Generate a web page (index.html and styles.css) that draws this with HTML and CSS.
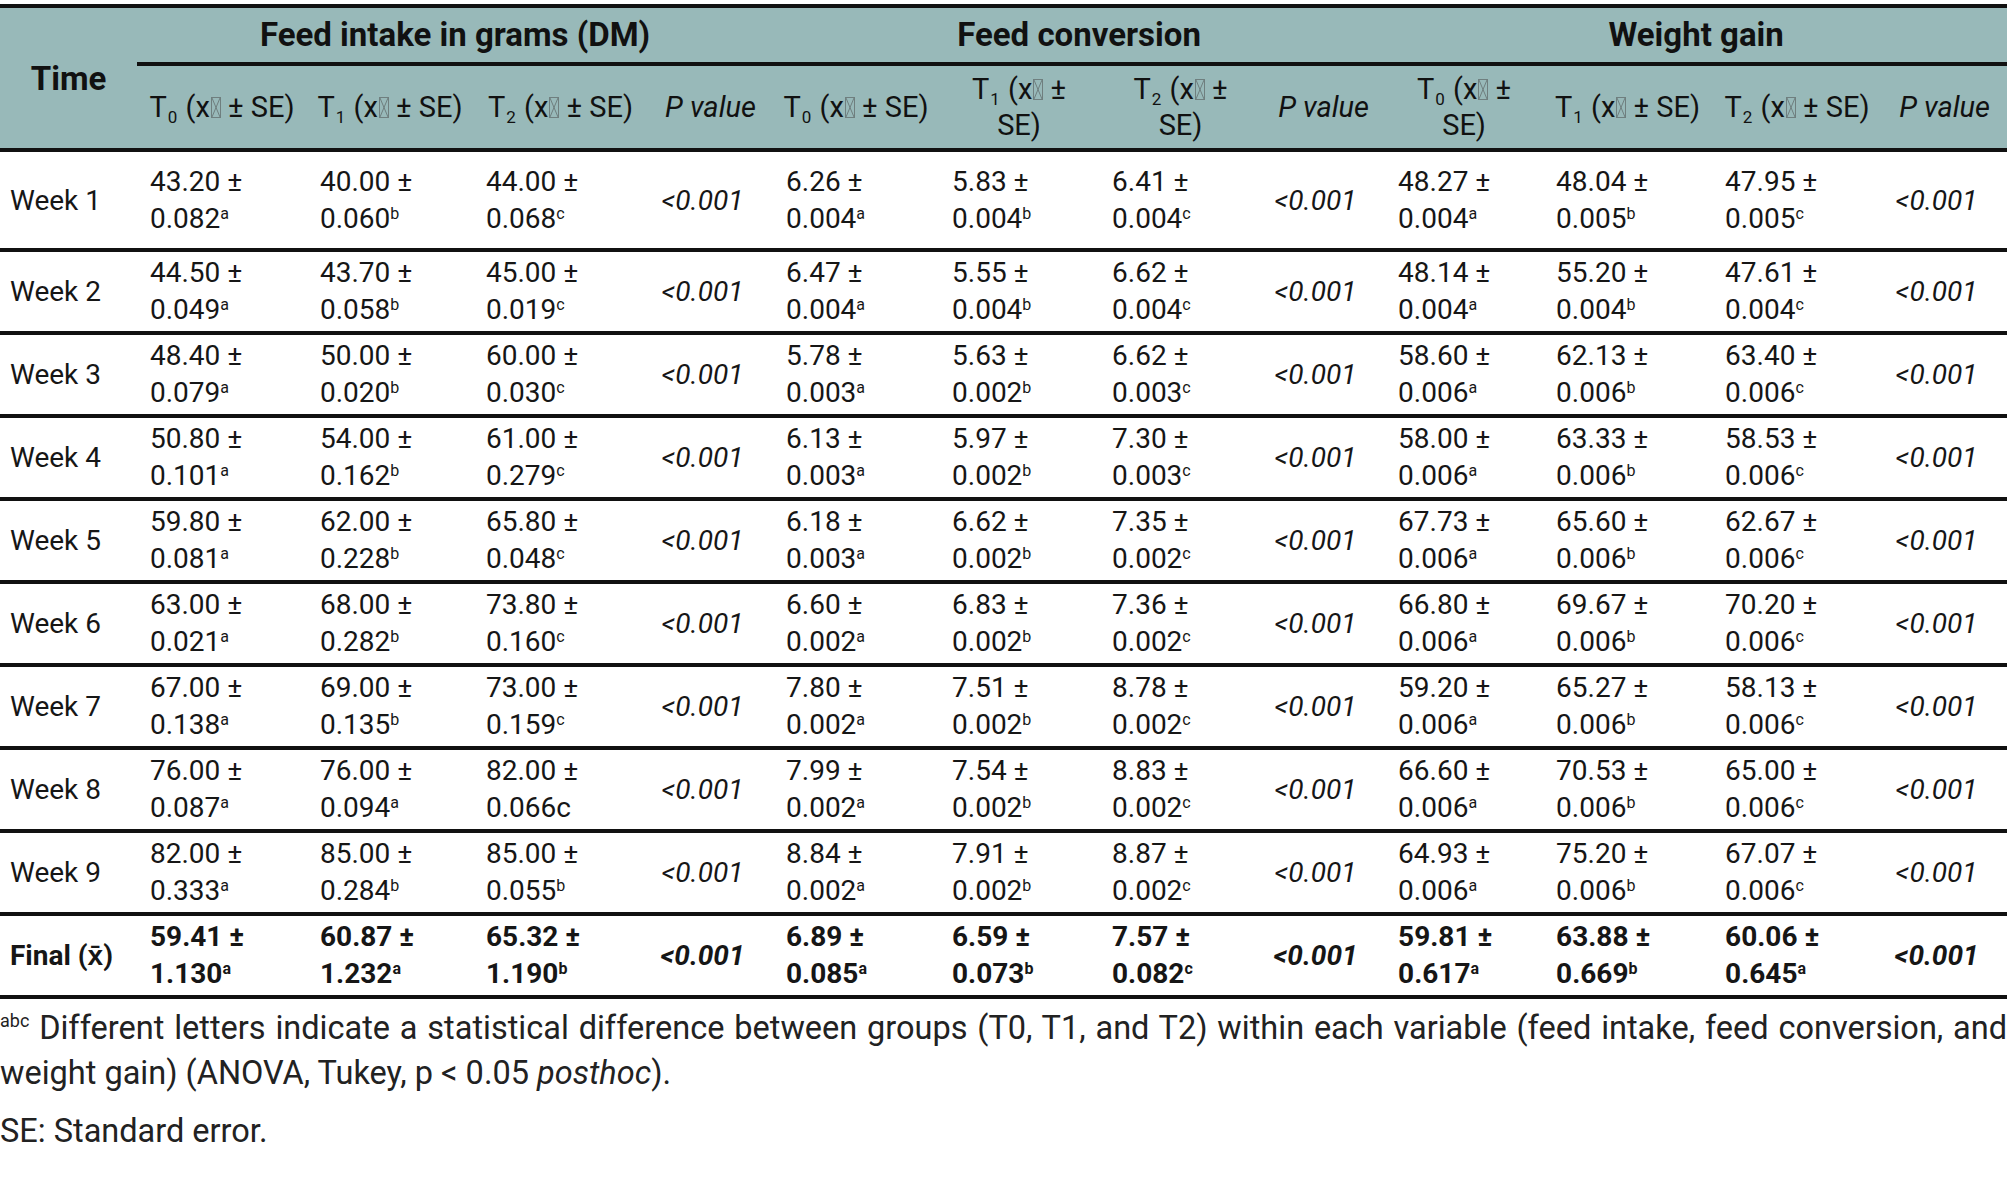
FILE: index.html
```html
<!DOCTYPE html>
<html lang="en">
<head>
<meta charset="utf-8">
<title>Feed intake, feed conversion and weight gain</title>
<link rel="stylesheet" href="styles.css">
</head>
<body>
<div class="wrap">
<table class="data">
  <colgroup>
    <col class="c-time">
    <col class="c170"><col class="c166"><col class="c175"><col class="c125">
    <col class="c166"><col class="c160"><col class="c163"><col class="c123">
    <col class="c158"><col class="c169"><col class="c170"><col class="c125">
  </colgroup>
  <thead>
    <tr class="grp">
      <th class="time" rowspan="2">Time</th>
      <th class="group" colspan="4">Feed intake in grams (DM)</th>
      <th class="group" colspan="4">Feed conversion</th>
      <th class="group" colspan="4">Weight gain</th>
    </tr>
    <tr class="sub">
      <th>T<sub>0</sub> (x<svg class="tofu" viewBox="0 0 10 21" width="10" height="21"><rect x="0.5" y="0.5" width="9" height="20"/><path d="M1 1 L9 20 M9 1 L1 20"/></svg> ± SE)</th>
      <th>T<sub>1</sub> (x<svg class="tofu" viewBox="0 0 10 21" width="10" height="21"><rect x="0.5" y="0.5" width="9" height="20"/><path d="M1 1 L9 20 M9 1 L1 20"/></svg> ± SE)</th>
      <th>T<sub>2</sub> (x<svg class="tofu" viewBox="0 0 10 21" width="10" height="21"><rect x="0.5" y="0.5" width="9" height="20"/><path d="M1 1 L9 20 M9 1 L1 20"/></svg> ± SE)</th>
      <th class="pv">P value</th>
      <th>T<sub>0</sub> (x<svg class="tofu" viewBox="0 0 10 21" width="10" height="21"><rect x="0.5" y="0.5" width="9" height="20"/><path d="M1 1 L9 20 M9 1 L1 20"/></svg> ± SE)</th>
      <th>T<sub>1</sub> (x<svg class="tofu" viewBox="0 0 10 21" width="10" height="21"><rect x="0.5" y="0.5" width="9" height="20"/><path d="M1 1 L9 20 M9 1 L1 20"/></svg> ±<br>SE)</th>
      <th>T<sub>2</sub> (x<svg class="tofu" viewBox="0 0 10 21" width="10" height="21"><rect x="0.5" y="0.5" width="9" height="20"/><path d="M1 1 L9 20 M9 1 L1 20"/></svg> ±<br>SE)</th>
      <th class="pv">P value</th>
      <th>T<sub>0</sub> (x<svg class="tofu" viewBox="0 0 10 21" width="10" height="21"><rect x="0.5" y="0.5" width="9" height="20"/><path d="M1 1 L9 20 M9 1 L1 20"/></svg> ±<br>SE)</th>
      <th>T<sub>1</sub> (x<svg class="tofu" viewBox="0 0 10 21" width="10" height="21"><rect x="0.5" y="0.5" width="9" height="20"/><path d="M1 1 L9 20 M9 1 L1 20"/></svg> ± SE)</th>
      <th>T<sub>2</sub> (x<svg class="tofu" viewBox="0 0 10 21" width="10" height="21"><rect x="0.5" y="0.5" width="9" height="20"/><path d="M1 1 L9 20 M9 1 L1 20"/></svg> ± SE)</th>
      <th class="pv">P value</th>
    </tr>
  </thead>
  <tbody>
    <tr class="first">
      <td class="wk">Week 1</td>
      <td>43.20 ±<br>0.082<sup>a</sup></td><td>40.00 ±<br>0.060<sup>b</sup></td><td>44.00 ±<br>0.068<sup>c</sup></td><td class="p">&lt;0.001</td>
      <td>6.26 ±<br>0.004<sup>a</sup></td><td>5.83 ±<br>0.004<sup>b</sup></td><td>6.41 ±<br>0.004<sup>c</sup></td><td class="p">&lt;0.001</td>
      <td>48.27 ±<br>0.004<sup>a</sup></td><td>48.04 ±<br>0.005<sup>b</sup></td><td>47.95 ±<br>0.005<sup>c</sup></td><td class="p">&lt;0.001</td>
    </tr>
    <tr>
      <td class="wk">Week 2</td>
      <td>44.50 ±<br>0.049<sup>a</sup></td><td>43.70 ±<br>0.058<sup>b</sup></td><td>45.00 ±<br>0.019<sup>c</sup></td><td class="p">&lt;0.001</td>
      <td>6.47 ±<br>0.004<sup>a</sup></td><td>5.55 ±<br>0.004<sup>b</sup></td><td>6.62 ±<br>0.004<sup>c</sup></td><td class="p">&lt;0.001</td>
      <td>48.14 ±<br>0.004<sup>a</sup></td><td>55.20 ±<br>0.004<sup>b</sup></td><td>47.61 ±<br>0.004<sup>c</sup></td><td class="p">&lt;0.001</td>
    </tr>
    <tr>
      <td class="wk">Week 3</td>
      <td>48.40 ±<br>0.079<sup>a</sup></td><td>50.00 ±<br>0.020<sup>b</sup></td><td>60.00 ±<br>0.030<sup>c</sup></td><td class="p">&lt;0.001</td>
      <td>5.78 ±<br>0.003<sup>a</sup></td><td>5.63 ±<br>0.002<sup>b</sup></td><td>6.62 ±<br>0.003<sup>c</sup></td><td class="p">&lt;0.001</td>
      <td>58.60 ±<br>0.006<sup>a</sup></td><td>62.13 ±<br>0.006<sup>b</sup></td><td>63.40 ±<br>0.006<sup>c</sup></td><td class="p">&lt;0.001</td>
    </tr>
    <tr>
      <td class="wk">Week 4</td>
      <td>50.80 ±<br>0.101<sup>a</sup></td><td>54.00 ±<br>0.162<sup>b</sup></td><td>61.00 ±<br>0.279<sup>c</sup></td><td class="p">&lt;0.001</td>
      <td>6.13 ±<br>0.003<sup>a</sup></td><td>5.97 ±<br>0.002<sup>b</sup></td><td>7.30 ±<br>0.003<sup>c</sup></td><td class="p">&lt;0.001</td>
      <td>58.00 ±<br>0.006<sup>a</sup></td><td>63.33 ±<br>0.006<sup>b</sup></td><td>58.53 ±<br>0.006<sup>c</sup></td><td class="p">&lt;0.001</td>
    </tr>
    <tr>
      <td class="wk">Week 5</td>
      <td>59.80 ±<br>0.081<sup>a</sup></td><td>62.00 ±<br>0.228<sup>b</sup></td><td>65.80 ±<br>0.048<sup>c</sup></td><td class="p">&lt;0.001</td>
      <td>6.18 ±<br>0.003<sup>a</sup></td><td>6.62 ±<br>0.002<sup>b</sup></td><td>7.35 ±<br>0.002<sup>c</sup></td><td class="p">&lt;0.001</td>
      <td>67.73 ±<br>0.006<sup>a</sup></td><td>65.60 ±<br>0.006<sup>b</sup></td><td>62.67 ±<br>0.006<sup>c</sup></td><td class="p">&lt;0.001</td>
    </tr>
    <tr>
      <td class="wk">Week 6</td>
      <td>63.00 ±<br>0.021<sup>a</sup></td><td>68.00 ±<br>0.282<sup>b</sup></td><td>73.80 ±<br>0.160<sup>c</sup></td><td class="p">&lt;0.001</td>
      <td>6.60 ±<br>0.002<sup>a</sup></td><td>6.83 ±<br>0.002<sup>b</sup></td><td>7.36 ±<br>0.002<sup>c</sup></td><td class="p">&lt;0.001</td>
      <td>66.80 ±<br>0.006<sup>a</sup></td><td>69.67 ±<br>0.006<sup>b</sup></td><td>70.20 ±<br>0.006<sup>c</sup></td><td class="p">&lt;0.001</td>
    </tr>
    <tr>
      <td class="wk">Week 7</td>
      <td>67.00 ±<br>0.138<sup>a</sup></td><td>69.00 ±<br>0.135<sup>b</sup></td><td>73.00 ±<br>0.159<sup>c</sup></td><td class="p">&lt;0.001</td>
      <td>7.80 ±<br>0.002<sup>a</sup></td><td>7.51 ±<br>0.002<sup>b</sup></td><td>8.78 ±<br>0.002<sup>c</sup></td><td class="p">&lt;0.001</td>
      <td>59.20 ±<br>0.006<sup>a</sup></td><td>65.27 ±<br>0.006<sup>b</sup></td><td>58.13 ±<br>0.006<sup>c</sup></td><td class="p">&lt;0.001</td>
    </tr>
    <tr>
      <td class="wk">Week 8</td>
      <td>76.00 ±<br>0.087<sup>a</sup></td><td>76.00 ±<br>0.094<sup>a</sup></td><td>82.00 ±<br>0.066c</td><td class="p">&lt;0.001</td>
      <td>7.99 ±<br>0.002<sup>a</sup></td><td>7.54 ±<br>0.002<sup>b</sup></td><td>8.83 ±<br>0.002<sup>c</sup></td><td class="p">&lt;0.001</td>
      <td>66.60 ±<br>0.006<sup>a</sup></td><td>70.53 ±<br>0.006<sup>b</sup></td><td>65.00 ±<br>0.006<sup>c</sup></td><td class="p">&lt;0.001</td>
    </tr>
    <tr>
      <td class="wk">Week 9</td>
      <td>82.00 ±<br>0.333<sup>a</sup></td><td>85.00 ±<br>0.284<sup>b</sup></td><td>85.00 ±<br>0.055<sup>b</sup></td><td class="p">&lt;0.001</td>
      <td>8.84 ±<br>0.002<sup>a</sup></td><td>7.91 ±<br>0.002<sup>b</sup></td><td>8.87 ±<br>0.002<sup>c</sup></td><td class="p">&lt;0.001</td>
      <td>64.93 ±<br>0.006<sup>a</sup></td><td>75.20 ±<br>0.006<sup>b</sup></td><td>67.07 ±<br>0.006<sup>c</sup></td><td class="p">&lt;0.001</td>
    </tr>
    <tr class="final">
      <td class="wk">Final (x̄)</td>
      <td>59.41 ±<br>1.130<sup>a</sup></td><td>60.87 ±<br>1.232<sup>a</sup></td><td>65.32 ±<br>1.190<sup>b</sup></td><td class="p">&lt;0.001</td>
      <td>6.89 ±<br>0.085<sup>a</sup></td><td>6.59 ±<br>0.073<sup>b</sup></td><td>7.57 ±<br>0.082<sup>c</sup></td><td class="p">&lt;0.001</td>
      <td>59.81 ±<br>0.617<sup>a</sup></td><td>63.88 ±<br>0.669<sup>b</sup></td><td>60.06 ±<br>0.645<sup>a</sup></td><td class="p">&lt;0.001</td>
    </tr>
  </tbody>
</table>
<div class="notes">
  <p class="just"><sup class="fn">abc</sup> Different letters indicate a statistical difference between groups (T0, T1, and T2) within each variable (feed intake, feed conversion, and weight gain) (ANOVA, Tukey, p &lt; 0.05 <em>posthoc</em>).</p>
  <p>SE: Standard error.</p>
</div>
</div>
</body>
</html>
```

FILE: styles.css
```css
html, body {
  margin: 0;
  padding: 0;
  background: #ffffff;
}

body {
  font-family: Roboto, "Liberation Sans", sans-serif;
  color: #161616;
}

.wrap {
  width: 2007px;
  padding-top: 4px;
}

.data {
  width: 2007px;
  table-layout: fixed;
  border-collapse: separate;
  border-spacing: 0;
  font-size: 28px;
}

.c-time { width: 137px; }
.c170 { width: 170px; }
.c166 { width: 166px; }
.c175 { width: 175px; }
.c125 { width: 125px; }
.c160 { width: 160px; }
.c163 { width: 163px; }
.c123 { width: 123px; }
.c158 { width: 158px; }
.c169 { width: 169px; }

.data thead th {
  background: #98b9b9;
  color: #111;
}

.data th.time {
  border-top: 4px solid #111;
  border-bottom: 4px solid #111;
  font-size: 33px;
  font-weight: 700;
  padding: 0 6px;
  text-align: center;
  vertical-align: middle;
}

.data th.group {
  border-top: 4px solid #111;
  border-bottom: 4px solid #111;
  font-size: 33px;
  font-weight: 700;
  line-height: 54px;
  height: 54px;
  padding: 0;
  text-align: center;
}

.data tr.sub th {
  font-size: 29px;
  font-weight: 400;
  line-height: 36px;
  padding: 5px 6px;
  text-align: center;
  vertical-align: middle;
  border-bottom: 4px solid #111;
  white-space: nowrap;
}

.data tr.sub th.pv {
  font-style: italic;
}

.data sub {
  font-size: 17px;
  line-height: 0;
  vertical-align: -6px;
  margin-left: 1px;
  margin-right: 1px;
}

.tofu {
  vertical-align: -1px;
  margin-left: 1px;
}

.tofu rect,
.tofu path {
  fill: none;
  stroke: #6f7f7f;
  stroke-width: 1;
}

.data td {
  line-height: 37px;
  padding: 2px 13px 3px;
  text-align: left;
  vertical-align: middle;
  border-bottom: 4px solid #111;
}

.data tr.first td {
  padding-top: 11px;
  padding-bottom: 11px;
}

.data td.wk {
  padding-left: 10px;
  padding-right: 4px;
  white-space: nowrap;
}

.data td.p {
  font-style: italic;
  text-align: center;
  padding-left: 0;
  padding-right: 16px;
}

.data sup {
  font-size: 16px;
  line-height: 0;
  vertical-align: 9px;
}

.data tr.final td {
  font-weight: 700;
}

.notes {
  font-size: 32.5px;
  color: #222;
  padding-top: 7px;
}

.notes p {
  margin: 0 0 13px;
  line-height: 45px;
}

.notes p.just {
  text-align: justify;
}

.notes sup.fn {
  font-size: 18px;
  line-height: 0;
  vertical-align: 12px;
}
```
